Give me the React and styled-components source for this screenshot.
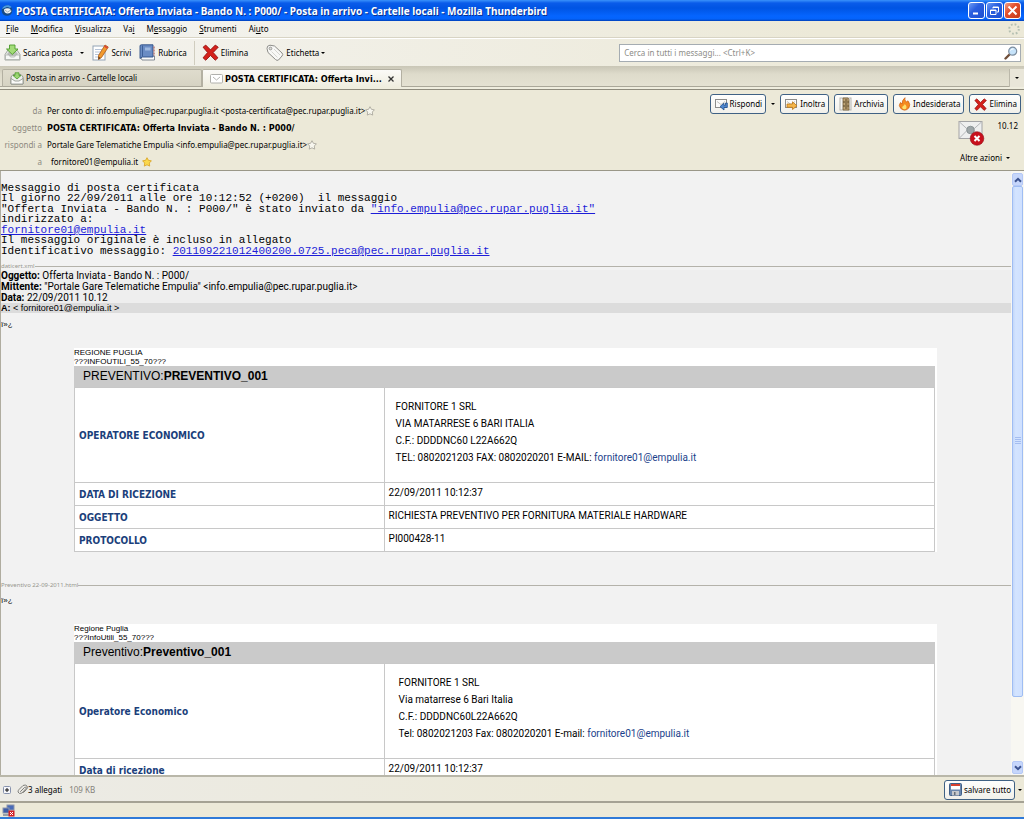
import React from "react";
import styled, { createGlobalStyle } from "styled-components";

const ui = `"Noto Sans", "Open Sans", sans-serif`;
const uiBold = `"DejaVu Sans Condensed", "Noto Sans", sans-serif`;
const arial = `"Liberation Sans", Arial, sans-serif`;
const body = `Roboto, "Liberation Sans", sans-serif`;
const mono = `"Liberation Mono", "Courier New", monospace`;

const GlobalStyle = createGlobalStyle`
  *, *::before, *::after { box-sizing: border-box; }
  body { margin: 0; background: #ece9d8; }
  button, input { font: inherit; color: inherit; }
  button { background: none; border: 0; padding: 0; margin: 0; }
  svg { display: block; flex: none; }
`;

const Window = styled.div`
  display: flex;
  flex-direction: column;
  height: 100vh;
  overflow: hidden;
  background: #ece9d8;
  border-bottom: 2px solid #2f7ad8;
  font-family: ${ui};
  font-size: 8px;
  line-height: 12px;
  color: #000;
`;

const TitleBar = styled.header`
  display: flex;
  flex: none;
  align-items: center;
  gap: 3px;
  height: 21px;
  padding: 0 3px 0 1px;
  background: linear-gradient(#3a92fb 0, #0a5cea 3px, #0054e3 8px, #0565ff 16px, #0463fb 19px, #0040b8 21px);
  color: #fff;
`;

const Title = styled.h1`
  flex: 1;
  margin: 0;
  font-size: 10px;
  font-weight: 700;
  line-height: 16px;
  white-space: nowrap;
  text-shadow: 1px 1px 0 #0a318f;
`;

const WindowButtons = styled.div`
  display: flex;
  gap: 1px;
`;

const WindowButton = styled.button`
  display: flex;
  align-items: center;
  justify-content: center;
  width: 17px;
  height: 17px;
  border: 1px solid #fff;
  border-radius: 3px;
  background: ${(p) =>
    p.$close
      ? "linear-gradient(135deg, #f0a088, #e2512e 40%, #c63a18)"
      : "linear-gradient(135deg, #6f9cf4, #2a5fe0 40%, #1c4fd0)"};
`;

const MenuBar = styled.nav`
  display: flex;
  flex: none;
  align-items: center;
  gap: 12px;
  height: 17px;
  padding: 0 4px 0 6px;
  border-bottom: 1px solid #d8d4c4;
  background: linear-gradient(90deg, #f5f5f3, #ece9d8 80%);
  & > svg { margin-left: auto; }
`;

const MenuItem = styled.button`
  white-space: nowrap;
`;

const Toolbar = styled.div`
  display: flex;
  flex: none;
  align-items: center;
  height: 28px;
  padding: 0 3px 0 4px;
  border-top: 1px solid #fff;
  background: linear-gradient(90deg, #f4f3ef, #ece9d8 85%);
`;

const ToolGroup = styled.div`
  display: flex;
  align-items: center;
  gap: ${(p) => p.$gap}px;
`;

const ToolButton = styled.button`
  display: flex;
  align-items: center;
  gap: 2px;
  white-space: nowrap;
`;

const Divider = styled.div`
  width: 1px;
  height: 24px;
  margin: 0 7px;
  background: #d0cdbf;
`;

const Caret = styled.span`
  width: 0;
  height: 0;
  margin-left: ${(p) => p.$gap || 0}px;
  border: 2px solid transparent;
  border-top-color: #000;
  border-bottom: 0;
`;

const SearchBox = styled.label`
  display: flex;
  align-items: center;
  width: 39.5%;
  height: 18px;
  margin-left: auto;
  padding: 0 2px 0 4px;
  border: 1px solid #a5acb2;
  background: #fff;
`;

const SearchInput = styled.input`
  flex: 1;
  min-width: 0;
  padding: 0;
  border: 0;
  outline: 0;
  background: none;
  &::placeholder { color: #8d8d88; opacity: 1; }
`;

const TabStrip = styled.div`
  display: flex;
  flex: none;
  align-items: flex-end;
  height: 24px;
  padding: 0 0 2px 2px;
  border-bottom: 1px solid #8e8b7d;
  background: linear-gradient(#c9c6b6 0, #dedbcb 8px, #e4e1d2 20px, #aaa799 20px, #aaa799 21px, #efedde 21px);
`;

const Tab = styled.button`
  display: flex;
  align-items: center;
  gap: 2px;
  width: 200px;
  height: 18px;
  padding: 0 7px;
  border: 1px solid #b3b0a2;
  border-bottom: ${(p) => (p.$active ? "0" : "1px solid #aaa799")};
  border-radius: 2px 2px 0 0;
  background: ${(p) => (p.$active ? "linear-gradient(#fbfaf7, #efeddf)" : "linear-gradient(#dfdccd, #d6d3c3)")};
  white-space: nowrap;
`;

const TabLabel = styled.span`
  flex: 1;
  text-align: left;
`;

const ActiveTabLabel = styled(TabLabel)`
  font-family: ${uiBold};
  font-size: 9px;
  font-weight: 700;
`;

const TabMenu = styled.button`
  display: flex;
  align-items: center;
  justify-content: center;
  width: 15px;
  height: 18px;
  margin-left: auto;
  border-left: 1px solid #bbb8aa;
  background: #e9e6d9;
`;

const MessageHeader = styled.section`
  display: flex;
  flex: none;
  justify-content: space-between;
  height: 81px;
  padding: 4px 3px 0 0;
  border-bottom: 1px solid #9a9788;
  background: #ece9d8;
`;

const Fields = styled.dl`
  display: grid;
  grid-template-columns: 42px auto;
  grid-auto-rows: 17px;
  column-gap: 5px;
  align-items: center;
  margin: 8px 0 0;
  white-space: nowrap;
`;

const FieldName = styled.dt`
  color: #8d8a80;
  text-align: right;
`;

const FieldValue = styled.dd`
  display: flex;
  align-items: center;
  margin: 0;
  padding-left: ${(p) => (p.$inset ? 4 : 0)}px;
  gap: ${(p) => (p.$inset ? 4 : 0)}px;
`;

const Subject = styled(FieldValue)`
  font-family: ${uiBold};
  font-size: 9px;
  font-weight: 700;
`;

const HeaderSide = styled.div`
  display: flex;
  flex-direction: column;
  align-items: flex-end;
`;

const Actions = styled.div`
  display: flex;
  align-items: center;
  gap: 5px;
`;

const ActionButton = styled.button`
  display: flex;
  align-items: center;
  gap: 2px;
  height: 20px;
  padding: 0 3px 0 4px;
  border: 1px solid #3f6184;
  border-radius: 3px;
  background: linear-gradient(#fefefd, #f1f0ea);
  white-space: nowrap;
`;

const SplitMenu = styled.button`
  display: flex;
  width: 4px;
`;

const Stamp = styled.div`
  display: flex;
  align-items: flex-start;
  gap: 13px;
  padding: 6px 3px 0 0;
`;

const MoreActions = styled.button`
  display: flex;
  align-items: center;
  margin: 6px 11px 0 0;
`;

const Viewer = styled.main`
  display: flex;
  flex: 1;
  min-height: 0;
  background: #f2f2f2;
`;

const Message = styled.article`
  flex: 1;
  min-width: 0;
  overflow: hidden;
  border-left: 1px solid #b0ada0;
`;

const PlainText = styled.div`
  display: flex;
  flex-direction: column;
  gap: 1px;
  padding: 12px 0 6px;
  font-family: ${mono};
  font-size: 11px;
  line-height: 10px;
`;

const Lines = styled.p`
  margin: 0;
  white-space: pre;
  a { color: #1d1dd8; }
`;

const Part = styled.h2`
  display: flex;
  align-items: center;
  height: 8px;
  margin: 0;
  font-size: 6px;
  font-weight: 400;
  line-height: 8px;
  color: #96968e;
  &::after {
    content: "";
    flex: 1;
    height: 1px;
    background: #b4b2aa;
  }
`;

const InnerHeader = styled.div`
  background: #eee;
  font-family: ${body};
  font-size: 10px;
  line-height: 11px;
`;

const InnerRow = styled.div`
  white-space: nowrap;
`;

const Recipient = styled(InnerRow)`
  background: #dcdcdc;
  font-family: ${arial};
  font-size: 9px;
  line-height: 10px;
`;

const Bom = styled.p`
  margin: 7px 0 18px;
  font-family: ${arial};
  font-size: 8px;
  line-height: 10px;
`;

const Sheet = styled.section`
  margin: 0 74px 29px 73px;
  background: #fff;
  padding-right: 2px;
  font-family: ${arial};
  text-transform: ${(p) => (p.$upper ? "uppercase" : "none")};
`;

const SheetIntro = styled.p`
  margin: 0;
  font-size: 8px;
  line-height: 9px;
`;

const SheetTable = styled.table`
  width: 100%;
  border-collapse: collapse;
  table-layout: fixed;
  line-height: 12px;
  caption {
    height: 21px;
    padding-left: 9px;
    background: #cacaca;
    font-size: 12px;
    line-height: 21px;
    text-align: left;
  }
  th, td { border: 1px solid #c8c8c8; font-size: 10px; }
  th {
    width: 36%;
    padding: 1px 4px 0;
    font-family: ${uiBold};
    font-weight: 700;
    color: #1b3f7b;
    text-align: left;
  }
  td {
    height: 23px;
    padding: 4px 4px 2px;
    font-family: ${body};
    vertical-align: top;
  }
`;

const Address = styled.address`
  height: 88px;
  padding: 6px 0 0 ${(p) => p.$inset}px;
  font-style: normal;
  line-height: 17px;
  a {
    color: #1b3f8b;
    text-decoration: none;
    text-transform: none;
  }
`;

const ScrollBar = styled.div`
  display: flex;
  flex-direction: column;
  flex: none;
  width: 13px;
  padding: 2px 1px 1px;
  background: #f8f7f2;
`;

const ScrollButton = styled.button`
  display: flex;
  align-items: center;
  justify-content: center;
  height: 13px;
  border: 1px solid #b4c8f6;
  border-radius: 2px;
  background: #c6d6fb;
`;

const Thumb = styled.div`
  display: flex;
  align-items: center;
  justify-content: center;
  flex: 0 1 85%;
  margin-bottom: auto;
  border: 1px solid #9fbdf3;
  border-radius: 2px;
  background: linear-gradient(90deg, #c3d7fa, #d3e4ff 30%, #cfe0ff);
`;

const AttachBar = styled.footer`
  display: flex;
  flex: none;
  align-items: center;
  height: 26px;
  padding: 1px 2px 0 3px;
  border-top: 2px solid #b9b7a9;
  background: linear-gradient(90deg, #ecebe6, #ece9d8 60%);
  & > ${ActionButton} { margin-left: auto; }
`;

const Muted = styled.span`
  margin-left: 7px;
  color: #85827a;
`;

const AttachCount = styled.span`
  display: flex;
  align-items: center;
  margin-left: 6px;
`;

const StatusBar = styled.footer`
  display: flex;
  flex: none;
  align-items: center;
  height: 16px;
  padding-left: 2px;
  border-top: 2px solid #a5a294;
  background: #ece9d8;
`;

const ThunderbirdIcon = () => (
  <svg width="12" height="13" viewBox="0 0 12 13">
    <circle cx="6" cy="6.500" r="5.300" fill="#174a86" />
    <path d="M1 5C2 1 8 0 10.500 3L9 4Q6 2 4 4Z" fill="#4d9be0" />
    <path d="M3 5.500Q5 3.500 8.500 4.500L10.500 7Q9 10 6 9.500Q3 9 3 5.500Z" fill="#eef1f2" />
    <path d="M4 6L6.500 8L10 6" fill="none" stroke="#8b9aa6" strokeWidth=".8" />
  </svg>
);
const MinimizeIcon = () => (
  <svg width="11" height="11"><path d="M2 8.500H7" stroke="#fff" strokeWidth="2" /></svg>
);
const RestoreIcon = () => (
  <svg width="11" height="11" fill="none" stroke="#fff">
    <path d="M4 3.500V2H9.500V7H8M4 2.500H9.500M1.500 5H7V9.500H1.500ZM1.500 5.500H7" />
  </svg>
);
const CloseIcon = () => (
  <svg width="11" height="11"><path d="M1.500 1.500L9.500 9.500M9.500 1.500L1.500 9.500" stroke="#fff" strokeWidth="2" /></svg>
);
const Throbber = () => (
  <svg width="12" height="12" viewBox="0 0 12 12">
    <circle cx="6" cy="6" r="4.800" fill="none" stroke="#b5c0b2" strokeWidth="2" strokeDasharray="1.800 1.970" />
  </svg>
);
const InboxIcon = () => (
  <svg width="17" height="17" viewBox="0 0 17 17">
    <path d="M1 10.500L4 6H13L16 10.500V16H1Z" fill="#e9ebe9" stroke="#9a9f9a" strokeWidth=".9" />
    <path d="M3 10L5 7.500H12L14 10L11.500 12H5.500Z" fill="#b9bdb9" />
    <path d="M1.500 11H5L6.500 13H10.500L12 11H15.500V15.500H1.500Z" fill="#f7f8f7" stroke="#a5aaa5" strokeWidth=".7" />
    <path d="M5.500 1H11V5H14L8.300 10.500L2.500 5H5.500Z" fill="#a3dc78" stroke="#4c9a2a" strokeWidth=".9" />
  </svg>
);
const GetMailTabIcon = () => (
  <svg width="14" height="13" viewBox="0 0 14 13">
    <path d="M1 5L3 2.500H11L13 5V12H1Z" fill="#eef0ec" stroke="#8a9088" strokeWidth=".9" />
    <path d="M5 .8H9V3.500H11L7 7L3 3.500H5Z" fill="#9bd673" stroke="#4c9a2a" strokeWidth=".8" />
    <path d="M1 6.500L5 9H9L13 6.500V12H1Z" fill="#fafaf8" stroke="#8a9088" strokeWidth=".8" />
  </svg>
);
const WriteIcon = () => (
  <svg width="17" height="17" viewBox="0 0 17 17">
    <rect x="1" y="2" width="12" height="14" fill="#fff" stroke="#93a3b5" />
    <path d="M3 5.500H10M3 8H9M3 10.500H8M3 13H6" stroke="#b5c3d6" />
    <path d="M13 1L16.300 3L9.500 13.500L6.500 15.500L6.500 11.500Z" fill="#f29a2e" stroke="#a8591a" strokeWidth=".8" />
    <path d="M6.500 15.500V12.500L8.500 14Z" fill="#5b3a1d" />
    <path d="M12.500 2L15.600 4" stroke="#d8433a" strokeWidth="1.500" />
  </svg>
);
const BookIcon = () => (
  <svg width="17" height="17" viewBox="0 0 17 17">
    <path d="M2 14L4 12H15.500V16H3Z" fill="#fafafa" stroke="#67717e" strokeWidth=".8" />
    <path d="M1 2Q1 .8 2.500 .8H14V13H3L1 14.500Z" fill="#6a8cc4" stroke="#2e4f86" strokeWidth=".9" />
    <path d="M3.500 1.500V12.500" stroke="#3d5f98" />
    <rect x="6" y="3.500" width="5.500" height="3" fill="#9db8e0" />
    <path d="M15 2.500V12" stroke="#b87a7a" strokeWidth="1.500" strokeDasharray="2 1" />
  </svg>
);
const CrossIcon = ({ size = 17 }) => (
  <svg width={size} height={size} viewBox="0 0 16 16">
    <path d="M1 3L3.500 1L8 5.500L12.500 1L15.300 3L10.500 8L15 13L12.500 15.300L8 10.800L3.500 15.300L1 13L5.300 8Z" fill="#d4211b" stroke="#8f0f0f" strokeWidth=".8" />
  </svg>
);
const TagIcon = () => (
  <svg width="18" height="18" viewBox="0 0 18 18">
    <path d="M1 4.500Q.8 1.500 4 1.200L8.500 2L16 9Q17.500 10.500 16 12L12.500 16Q11 17 9.500 15.500L2 8.500Z" fill="#f8f8f6" stroke="#8d8d89" />
    <circle cx="4.500" cy="4.500" r="1.400" fill="#dcdcd8" stroke="#8d8d89" strokeWidth=".8" />
    <path d="M8 5L14 11M5.500 7.500L11.500 13.500" stroke="#d6d6d2" />
  </svg>
);
const SearchIcon = () => (
  <svg width="14" height="14" viewBox="0 0 14 14">
    <path d="M6 8L1.500 12.500" stroke="#704f3a" strokeWidth="2.400" strokeLinecap="round" />
    <circle cx="8.700" cy="5.200" r="4" fill="#c6e3fa" stroke="#7c8d9f" strokeWidth="1.200" />
    <path d="M6.500 4.500Q7.500 2.500 9.500 3" fill="none" stroke="#fff" />
  </svg>
);
const MailIcon = () => (
  <svg width="13" height="13" viewBox="0 0 13 13">
    <rect x=".5" y="2.500" width="12" height="8.500" rx="1" fill="#fff" stroke="#b0b0ac" />
    <path d="M3 5L6.500 8L10 5" fill="none" stroke="#b5b5b1" />
  </svg>
);
const StarIcon = ({ filled }) => (
  <svg width="10" height="10" viewBox="0 0 10 10">
    <path
      d="M5 .7L6.400 3.300L9.400 3.800L7.300 6L7.700 9.100L5 7.800L2.300 9.100L2.700 6L.6 3.800L3.600 3.300Z"
      fill={filled ? "#fbd84a" : "#f7f6ee"}
      stroke={filled ? "#d9a21f" : "#a5a298"}
      strokeWidth=".8"
    />
  </svg>
);
const ReplyIcon = ({ forward }) => (
  <svg width="13" height="13" viewBox="0 0 13 13">
    <rect x=".5" y="1.500" width="11" height="8" fill="#fbfbfa" stroke="#8c8c8a" />
    <path d="M2 3.500L6 6.500L10 3.500" fill="none" stroke="#c2c2be" />
    {forward ? (
      <path d="M2 6H7.500V3.800L12 7.800L7.500 11.500V9.300H2Z" fill="#f5b64a" stroke="#bd7616" strokeWidth=".8" />
    ) : (
      <path d="M12.300 5V9.500H9V12L5 8.600L9 5.200V7.300H10.500V5Z" fill="#4f87cf" stroke="#20508f" strokeWidth=".8" />
    )}
  </svg>
);
const ArchiveIcon = () => (
  <svg width="13" height="14" viewBox="0 0 13 14">
    <rect x="1" y="1" width="11" height="12" fill="#f4f4f2" stroke="#b5b5b0" />
    <path d="M4 1H9L10 2.500V13H4Z" fill="#c2a778" stroke="#715b39" strokeWidth=".8" />
    <path d="M4 5H10M4 9H10M6 3H8.500M6 7H8.500M6 11H8.500" stroke="#594729" />
  </svg>
);
const FlameIcon = () => (
  <svg width="13" height="14" viewBox="0 0 13 14">
    <path d="M7 .7Q6 3 8.500 5L10 3.800Q13 7.500 10.800 11Q7 15 2.800 11.500Q0 8.500 2.500 5.500L4 7Q4 3 7 .7Z" fill="#f58a1f" stroke="#cc5d10" strokeWidth=".7" />
    <path d="M6.700 7Q9.500 9.500 8 11.700Q5.500 13 4.200 11Q3.800 9.500 5.500 8.800Q6.500 8.200 6.700 7Z" fill="#fde06b" />
  </svg>
);
const JunkMailIcon = () => (
  <svg width="27" height="26" viewBox="0 0 27 26">
    <rect x="1" y="1.500" width="23" height="17" fill="#eeefef" stroke="#a3a4a6" />
    <path d="M1.500 2L12.500 12L23.500 2M1.500 18L9.500 10M23.500 18L15.500 10" fill="none" stroke="#b4b6b9" />
    <circle cx="12.500" cy="10" r="3.800" fill="#9ea6a8" stroke="#7f898c" strokeWidth=".8" />
    <circle cx="19" cy="18.500" r="6.800" fill="#c8101c" stroke="#8f0a12" strokeWidth=".6" />
    <path d="M16.500 16L21.500 21M21.500 16L16.500 21" stroke="#fff" strokeWidth="2" />
  </svg>
);
const ChevronIcon = ({ down }) => (
  <svg width="8" height="6" viewBox="0 0 8 6">
    <path d={down ? "M1 1.200L4 4.200L7 1.200" : "M1 4.800L4 1.800L7 4.800"} fill="none" stroke="#3c5390" strokeWidth="2" />
  </svg>
);
const GripIcon = () => (
  <svg width="6" height="8"><path d="M0 .5H6M0 2.500H6M0 4.500H6M0 6.500H6" stroke="#a4bdf0" /></svg>
);
const ExpandIcon = () => (
  <svg width="8" height="8" viewBox="0 0 8 8">
    <rect x=".5" y=".5" width="7" height="7" rx="1" fill="#f5f6fa" stroke="#8792ad" />
    <path d="M2 4H6M4 2V6" stroke="#111" />
  </svg>
);
const ClipIcon = () => (
  <svg width="11" height="11" viewBox="0 0 11 11" fill="none" stroke="#80807c" strokeLinecap="round">
    <path d="M3.500 7.500L7.500 3.500Q9 2.500 9.500 4L5 9Q2 10.500 1 8Q1 6.500 2 5.500L6 1.500Q8.500 .3 10 2Q11 4 9.500 5.500L6.500 8.500" />
  </svg>
);
const SaveIcon = () => (
  <svg width="13" height="13" viewBox="0 0 13 13">
    <rect x=".5" y=".5" width="12" height="12" rx="1" fill="#6b87ad" stroke="#3f5f88" />
    <rect x="2" y="1" width="9" height="5.500" fill="#fff" />
    <rect x="2" y="1" width="9" height="2" fill="#d8402f" />
    <rect x="3" y="8" width="7" height="4.500" fill="#c5c8cc" />
    <rect x="5" y="9" width="1.500" height="3" fill="#666e78" />
  </svg>
);
const OfflineIcon = () => (
  <svg width="13" height="13" viewBox="0 0 13 13">
    <rect x="5" y="1" width="7" height="5" fill="#496bb8" stroke="#8c96ab" />
    <rect x="1" y="4" width="6" height="5" fill="#3c5ba8" stroke="#8c96ab" />
    <path d="M1 11H7" stroke="#7b8498" strokeWidth="1.500" />
    <rect x="6.500" y="6.500" width="6" height="6" fill="#cf1f26" />
    <path d="M8 8L11 11M11 8L8 11" stroke="#fff" />
  </svg>
);

const menus = [
  ["", "F", "ile"],
  ["", "M", "odifica"],
  ["", "V", "isualizza"],
  ["Va", "i", ""],
  ["M", "e", "ssaggio"],
  ["", "S", "trumenti"],
  ["Ai", "u", "to"],
];

const received = ["Data di ricezione", "22/09/2011 10:12:37"];
const subject = ["Oggetto", "Richiesta preventivo per fornitura materiale hardware"];
const protocol = ["Protocollo", "PI000428-11"];

function Quote({ upper, inset, lines, rows }) {
  return (
    <Sheet $upper={upper}>
      <SheetIntro>
        Regione Puglia
        <br />
        ???InfoUtili_55_70???
      </SheetIntro>
      <SheetTable>
        <caption>
          Preventivo:<b>Preventivo_001</b>
        </caption>
        <tbody>
          <tr>
            <th scope="row">Operatore Economico</th>
            <td>
              <Address $inset={inset}>
                {lines.map((line) => (
                  <div key={line}>{line}</div>
                ))}
                <div>
                  Tel: 0802021203 Fax: 0802020201 E-mail: <a href="mailto:fornitore01@empulia.it">fornitore01@empulia.it</a>
                </div>
              </Address>
            </td>
          </tr>
          {rows.map(([name, value]) => (
            <tr key={name}>
              <th scope="row">{name}</th>
              <td>{value}</td>
            </tr>
          ))}
        </tbody>
      </SheetTable>
    </Sheet>
  );
}

export default function App() {
  return (
    <Window>
      <GlobalStyle />
      <TitleBar>
        <ThunderbirdIcon />
        <Title>POSTA CERTIFICATA: Offerta Inviata - Bando N. : P000/ - Posta in arrivo - Cartelle locali - Mozilla Thunderbird</Title>
        <WindowButtons>
          <WindowButton aria-label="Riduci a icona"><MinimizeIcon /></WindowButton>
          <WindowButton aria-label="Ripristina"><RestoreIcon /></WindowButton>
          <WindowButton $close aria-label="Chiudi"><CloseIcon /></WindowButton>
        </WindowButtons>
      </TitleBar>

      <MenuBar>
        {menus.map(([before, key, after]) => (
          <MenuItem key={before + key + after}>
            {before}
            <u>{key}</u>
            {after}
          </MenuItem>
        ))}
        <Throbber />
      </MenuBar>

      <Toolbar>
        <ToolGroup $gap={8}>
          <ToolButton><InboxIcon />Scarica posta<Caret $gap={6} /></ToolButton>
          <ToolButton><WriteIcon />Scrivi</ToolButton>
          <ToolButton><BookIcon />Rubrica</ToolButton>
        </ToolGroup>
        <Divider />
        <ToolGroup $gap={18}>
          <ToolButton><CrossIcon />Elimina</ToolButton>
          <ToolButton><TagIcon />Etichetta<Caret /></ToolButton>
        </ToolGroup>
        <SearchBox>
          <SearchInput type="search" aria-label="Cerca" placeholder="Cerca in tutti i messaggi... <Ctrl+K>" />
          <SearchIcon />
        </SearchBox>
      </Toolbar>

      <TabStrip>
        <Tab>
          <GetMailTabIcon />
          <TabLabel>Posta in arrivo - Cartelle locali</TabLabel>
        </Tab>
        <Tab $active>
          <MailIcon />
          <ActiveTabLabel>POSTA CERTIFICATA: Offerta Invi...</ActiveTabLabel>
          <svg width="6" height="6"><path d="M.5 .5L5.500 5.500M5.500 .5L.5 5.500" stroke="#333" strokeWidth="1.300" /></svg>
        </Tab>
        <TabMenu aria-label="Elenca schede"><Caret /></TabMenu>
      </TabStrip>

      <MessageHeader>
        <Fields>
          <FieldName>da</FieldName>
          <FieldValue>Per conto di: info.empulia@pec.rupar.puglia.it &lt;posta-certificata@pec.rupar.puglia.it&gt;<StarIcon /></FieldValue>
          <FieldName>oggetto</FieldName>
          <Subject>POSTA CERTIFICATA: Offerta Inviata - Bando N. : P000/</Subject>
          <FieldName>rispondi a</FieldName>
          <FieldValue>Portale Gare Telematiche Empulia &lt;info.empulia@pec.rupar.puglia.it&gt;<StarIcon /></FieldValue>
          <FieldName>a</FieldName>
          <FieldValue $inset>fornitore01@empulia.it<StarIcon filled /></FieldValue>
        </Fields>
        <HeaderSide>
          <Actions>
            <ActionButton><ReplyIcon />Rispondi</ActionButton>
            <SplitMenu aria-label="Altre risposte"><Caret /></SplitMenu>
            <ActionButton><ReplyIcon forward />Inoltra</ActionButton>
            <ActionButton><ArchiveIcon />Archivia</ActionButton>
            <ActionButton><FlameIcon />Indesiderata</ActionButton>
            <ActionButton><CrossIcon size={13} />Elimina</ActionButton>
          </Actions>
          <Stamp>
            <JunkMailIcon />
            <time>10.12</time>
          </Stamp>
          <MoreActions>Altre azioni<Caret $gap={4} /></MoreActions>
        </HeaderSide>
      </MessageHeader>

      <Viewer>
        <Message>
          <PlainText>
            <Lines>{"Messaggio di posta certificata\nIl giorno 22/09/2011 alle ore 10:12:52 (+0200)  il messaggio"}</Lines>
            <Lines>
              {"\"Offerta Inviata - Bando N. : P000/\" è stato inviato da "}
              <a href="mailto:info.empulia@pec.rupar.puglia.it">"info.empulia@pec.rupar.puglia.it"</a>
              {"\nindirizzato a:"}
            </Lines>
            <Lines>
              <a href="mailto:fornitore01@empulia.it">fornitore01@empulia.it</a>
              {"\nIl messaggio originale è incluso in allegato"}
            </Lines>
            <Lines>
              {"Identificativo messaggio: "}
              <a href="mailto:201109221012400200.0725.peca@pec.rupar.puglia.it">201109221012400200.0725.peca@pec.rupar.puglia.it</a>
            </Lines>
          </PlainText>

          <Part>daticert.xml</Part>
          <InnerHeader>
            <InnerRow><b>Oggetto:</b> Offerta Inviata - Bando N. : P000/</InnerRow>
            <InnerRow><b>Mittente:</b> "Portale Gare Telematiche Empulia" &lt;info.empulia@pec.rupar.puglia.it&gt;</InnerRow>
            <InnerRow><b>Data:</b> 22/09/2011 10.12</InnerRow>
            <Recipient><b>A:</b> &lt; fornitore01@empulia.it &gt;</Recipient>
          </InnerHeader>
          <Bom>ï»¿</Bom>
          <Quote
            upper
            inset={7}
            lines={["Fornitore 1 SRL", "Via matarrese 6 Bari Italia", "C.F.: DDDDNC60 L22A662Q"]}
            rows={[received, subject, protocol]}
          />

          <Part>Preventivo 22-09-2011.html</Part>
          <Bom>ï»¿</Bom>
          <Quote
            inset={10}
            lines={["FORNITORE 1 SRL", "Via matarrese 6 Bari Italia", "C.F.: DDDDNC60L22A662Q"]}
            rows={[received]}
          />
        </Message>
        <ScrollBar>
          <ScrollButton aria-label="Scorri su"><ChevronIcon /></ScrollButton>
          <Thumb><GripIcon /></Thumb>
          <ScrollButton aria-label="Scorri giù"><ChevronIcon down /></ScrollButton>
        </ScrollBar>
      </Viewer>

      <AttachBar>
        <button aria-label="Mostra allegati"><ExpandIcon /></button>
        <AttachCount><ClipIcon />3 allegati</AttachCount>
        <Muted>109 KB</Muted>
        <ActionButton><SaveIcon />salvare tutto</ActionButton>
        <Caret $gap={3} />
      </AttachBar>
      <StatusBar><OfflineIcon /></StatusBar>
    </Window>
  );
}
